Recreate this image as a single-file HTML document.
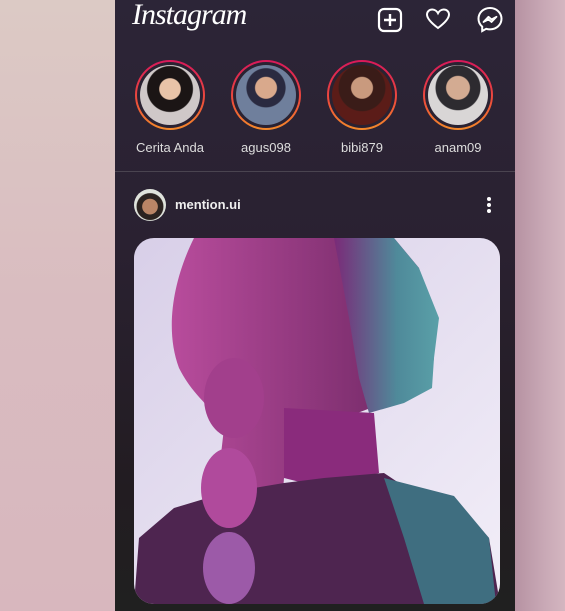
<!DOCTYPE html>
<html><head><style>
body{margin:0;width:565px;height:611px;overflow:hidden;position:relative;font-family:"Liberation Sans",sans-serif;
background:linear-gradient(180deg,#dccac5 0%,#d9bcc0 50%,#d8b7be 100%);}
.right{position:absolute;left:515px;top:0;width:50px;height:611px;background:linear-gradient(90deg,#b692a2,#c9a9b6 60%,#d4b6c0);}
.panel{position:absolute;left:115px;top:0;width:400px;height:611px;background:linear-gradient(180deg,#2c2537 0%,#2a2131 40%,#221c21 80%,#202020 100%);}
.logo{position:absolute;left:17px;top:-2px;color:#fff;font:italic 30px "Liberation Serif",serif;letter-spacing:-1px}
.st{position:absolute;top:60px;width:74px;text-align:center}
.ring{width:70px;height:70px;border-radius:50%;background:linear-gradient(180deg,#d8185a,#ee4f3a 60%,#f48a2a);margin:0 auto;padding:0;position:relative}
.ring i{position:absolute;left:2px;top:2px;width:66px;height:66px;border-radius:50%;background:#2a2232}
.ring b{position:absolute;left:5px;top:5px;width:60px;height:60px;border-radius:50%}
.st span{display:block;color:#ddd;font-size:13px;margin-top:10px}
.hr{position:absolute;left:0;top:171px;width:400px;height:1px;background:#4a4450}
</style></head><body>
<div class="right"></div>
<div class="panel">
<div class="logo">Instagram</div>
<svg style="position:absolute;left:262px;top:7px" width="26" height="26" viewBox="0 0 26 26"><rect x="2" y="2" width="22" height="22" rx="5" fill="none" stroke="#fff" stroke-width="2.2"/><path d="M13 7v12M7 13h12" stroke="#fff" stroke-width="2.4"/></svg>
<svg style="position:absolute;left:310px;top:7px" width="26" height="24" viewBox="0 0 26 24"><path d="M13 21C5 15 2 11 2 7.5 2 4.5 4.5 2.5 7.3 2.5 9.8 2.5 12 4.3 13 6.2 14 4.3 16.2 2.5 18.7 2.5 21.5 2.5 24 4.5 24 7.5 24 11 21 15 13 21Z" fill="none" stroke="#fff" stroke-width="2"/></svg>
<svg style="position:absolute;left:361px;top:6px" width="28" height="28" viewBox="0 0 28 28"><path d="M14 2C7.4 2 2.5 6.8 2.5 12.8c0 3.2 1.4 5.9 3.7 7.8V25l4-2.2c1.2.4 2.5.6 3.8.6 6.6 0 11.5-4.8 11.5-10.6S20.6 2 14 2Z" fill="none" stroke="#fff" stroke-width="2"/><path d="M7.5 16l5-5.2 3 2.6 5-2.6-5 5.2-3-2.6Z" fill="none" stroke="#fff" stroke-width="1.8" stroke-linejoin="round"/></svg>
<div class="st" style="left:18px"><div class="ring"><i></i><b style="background:radial-gradient(circle at 50% 40%,#e8c3a8 0 22%,#1b1515 24% 48%,#cfc8c8 50%)"></b></div><span>Cerita Anda</span></div>
<div class="st" style="left:114px"><div class="ring"><i></i><b style="background:radial-gradient(circle at 50% 38%,#d9a98c 0 22%,#2a2a40 24% 40%,#6f7f9c 42%)"></b></div><span>agus098</span></div>
<div class="st" style="left:210px"><div class="ring"><i></i><b style="background:radial-gradient(circle at 50% 38%,#c99a7e 0 22%,#3a1c18 24% 48%,#5b1c18 50%)"></b></div><span>bibi879</span></div>
<div class="st" style="left:306px"><div class="ring"><i></i><b style="background:radial-gradient(circle at 50% 38%,#d3ab92 0 24%,#2d2b30 26% 46%,#d9d6d6 48%)"></b></div><span>anam09</span></div>
<div class="hr"></div>
<div style="position:absolute;left:19px;top:189px;width:32px;height:32px;border-radius:50%;background:radial-gradient(circle at 50% 55%,#b98566 0 32%,#2b2320 34% 55%,#dfe3dc 58%)"></div>
<div style="position:absolute;left:60px;top:197px;color:#eee;font-weight:bold;font-size:13px">mention.ui</div>
<div style="position:absolute;left:372px;top:197px;width:4px">
<div style="width:4px;height:4px;border-radius:50%;background:#fff;margin-bottom:2px"></div><div style="width:4px;height:4px;border-radius:50%;background:#fff;margin-bottom:2px"></div><div style="width:4px;height:4px;border-radius:50%;background:#fff"></div></div>
<svg style="position:absolute;left:19px;top:238px;border-radius:20px" width="366" height="366" viewBox="0 0 366 366">
<defs><linearGradient id="bg" x1="0" y1="0" x2="1" y2="1"><stop offset="0" stop-color="#d8cfe8"/><stop offset="1" stop-color="#f2eef8"/></linearGradient>
<linearGradient id="fc" x1="0" y1="0" x2="1" y2="0"><stop offset="0" stop-color="#7a2a78"/><stop offset=".6" stop-color="#4f8a9a"/><stop offset="1" stop-color="#5aa0a8"/></linearGradient>
<linearGradient id="hr" x1="0" y1="0" x2="1" y2="0"><stop offset="0" stop-color="#b84c9c"/><stop offset="1" stop-color="#6a2560"/></linearGradient></defs>
<rect width="366" height="366" fill="url(#bg)"/>
<path d="M60 0 C40 40 30 90 45 130 C60 160 80 170 90 190 L70 366 L140 366 L150 240 L190 220 L210 180 L250 165 L295 150 L300 120 L290 70 L285 30 L260 0Z" fill="url(#hr)"/>
<path d="M200 0 L260 0 L285 30 L305 80 L300 120 L298 150 L270 165 L235 175 L225 140 L215 80Z" fill="url(#fc)"/>
<path d="M150 170 L240 175 L245 235 L190 250 L150 240Z" fill="#8a2b7c"/>
<path d="M190 240 L250 235 L265 245 L320 260 L355 300 L366 366 L0 366 L5 300 L40 270 L90 255 L150 245Z" fill="#4e2550"/>
<path d="M250 240 L320 258 L355 300 L362 366 L290 366 L270 300Z" fill="#3f6e80"/>
<ellipse cx="95" cy="250" rx="28" ry="40" fill="#b04a9c"/>
<ellipse cx="95" cy="330" rx="26" ry="36" fill="#9c5aa8"/>
<ellipse cx="100" cy="160" rx="30" ry="40" fill="#a23f8c"/>
</svg>
</div>
</body></html>
